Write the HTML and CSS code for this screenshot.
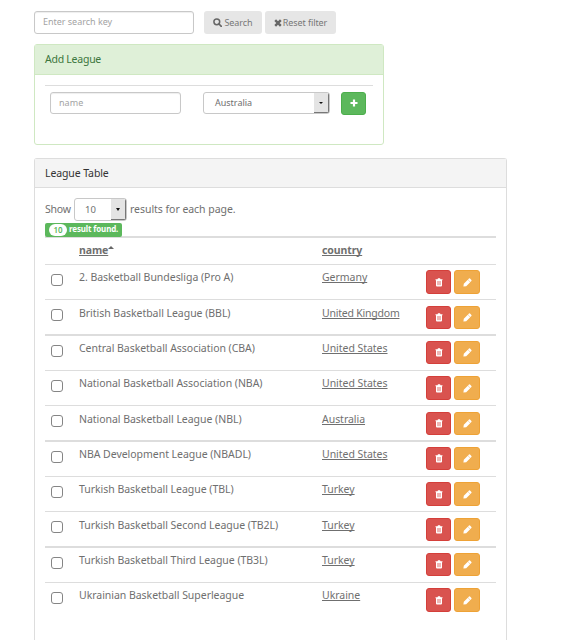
FILE: index.html
```
<!DOCTYPE html>
<html lang="en">
<head>
<meta charset="utf-8">
<title>League Table</title>
<link rel="stylesheet" href="styles.css">
</head>
<body>
<svg class="defs" width="0" height="0">
  <symbol id="trash" viewBox="0 0 8 9"><path d="M.5 1.200h2L3 .3h2l.5.900h2v1H7v5.300q0 1-1 1H2q-1 0-1-1V2.200H.5z" fill="#fff"/><path d="M3 3v4.200M5 3v4.200" stroke="#dc706c" stroke-width="1"/></symbol>
  <symbol id="pencil" viewBox="0 0 9 9"><path d="M.4 8.600l.4-2.800 4-4 2.400 2.400-4 4zM5 1.500l1-1q.5-.4 1 0l1.400 1.400q.4.5 0 1l-1 1z" fill="#fff"/></symbol>
</svg>
<form class="filter">
  <input class="field search" type="text" placeholder="Enter search key">
  <button class="grey find" type="button"><svg width="9" height="9" viewBox="0 0 9 9"><circle cx="3.8" cy="3.8" r="2.9" fill="none" stroke="#666" stroke-width="1.5"/><path d="M6 6l2.3 2.3" stroke="#666" stroke-width="1.7" stroke-linecap="round"/></svg><span>Search</span></button>
  <button class="grey reset" type="button"><svg width="8" height="8" viewBox="0 0 8 8"><path d="M1.200 1.200l5.600 5.600M6.800 1.200L1.200 6.800" stroke="#666" stroke-width="2.400"/></svg><span>Reset filter</span></button>
</form>
<section class="panel add">
  <h2>Add League</h2>
  <div class="add-row">
    <input class="field name" type="text" placeholder="name">
    <div class="select country"><span>Australia</span><i></i></div>
    <button class="plus" type="button"><svg width="8" height="8" viewBox="0 0 8 8"><path d="M4 .5v7M.5 4h7" stroke="#fff" stroke-width="2.200"/></svg></button>
  </div>
</section>
<section class="panel league">
  <h2>League Table</h2>
  <div class="show"><span class="show-l">Show</span><div class="select count"><span>10</span><i></i></div><span class="show-r">results for each page.</span></div>
  <div class="found"><b>10</b><span>result found.</span></div>
  <div class="head"><span></span><span class="sort"><a>name</a><i></i></span><a>country</a></div>
  <div class="rows">
    <div class="row"><input type="checkbox"><span>2. Basketball Bundesliga (Pro A)</span><a>Germany</a><button class="del"><svg><use href="#trash"/></svg></button><button class="edit"><svg><use href="#pencil"/></svg></button></div>
    <div class="row"><input type="checkbox"><span>British Basketball League (BBL)</span><a class="tight">United Kingdom</a><button class="del"><svg><use href="#trash"/></svg></button><button class="edit"><svg><use href="#pencil"/></svg></button></div>
    <div class="row"><input type="checkbox"><span>Central Basketball Association (CBA)</span><a>United States</a><button class="del"><svg><use href="#trash"/></svg></button><button class="edit"><svg><use href="#pencil"/></svg></button></div>
    <div class="row"><input type="checkbox"><span>National Basketball Association (NBA)</span><a>United States</a><button class="del"><svg><use href="#trash"/></svg></button><button class="edit"><svg><use href="#pencil"/></svg></button></div>
    <div class="row"><input type="checkbox"><span>National Basketball League (NBL)</span><a>Australia</a><button class="del"><svg><use href="#trash"/></svg></button><button class="edit"><svg><use href="#pencil"/></svg></button></div>
    <div class="row"><input type="checkbox"><span>NBA Development League (NBADL)</span><a>United States</a><button class="del"><svg><use href="#trash"/></svg></button><button class="edit"><svg><use href="#pencil"/></svg></button></div>
    <div class="row"><input type="checkbox"><span>Turkish Basketball League (TBL)</span><a>Turkey</a><button class="del"><svg><use href="#trash"/></svg></button><button class="edit"><svg><use href="#pencil"/></svg></button></div>
    <div class="row"><input type="checkbox"><span>Turkish Basketball Second League (TB2L)</span><a>Turkey</a><button class="del"><svg><use href="#trash"/></svg></button><button class="edit"><svg><use href="#pencil"/></svg></button></div>
    <div class="row"><input type="checkbox"><span>Turkish Basketball Third League (TB3L)</span><a>Turkey</a><button class="del"><svg><use href="#trash"/></svg></button><button class="edit"><svg><use href="#pencil"/></svg></button></div>
    <div class="row"><input type="checkbox"><span>Ukrainian Basketball Superleague</span><a>Ukraine</a><button class="del"><svg><use href="#trash"/></svg></button><button class="edit"><svg><use href="#pencil"/></svg></button></div>
  </div>
</section>
</body>
</html>
```
FILE: styles.css
```
* { box-sizing: border-box; }
body { margin: 0; padding: 11px 0 0 34px; height: 640px; background: #fff; color: #6f6f6f; font: 10.5px/14px "Noto Sans", sans-serif; }
button, input { font-family: inherit; margin: 0; }
button { border: 0; padding: 0; display: flex; align-items: center; justify-content: center; }
.defs { position: absolute; }
.filter { display: flex; height: 23px; }
.field { border: 1px solid #c8c8c8; border-radius: 3px; background: #fff; font-size: 9px; padding: 0 8px 1px; outline: 0; box-shadow: inset 0 1px 1px #eee; }
.field::placeholder { color: #a3a3a3; opacity: 1; }
.search { width: 160px; height: 23px; margin-right: 10px; padding-bottom: 2px; }
.search::placeholder { letter-spacing: -.02px; }
.grey { background: #e6e6e6; border-radius: 3px; color: #777; font-size: 9px; gap: 2px; }
.find { width: 58px; margin-right: 3px; letter-spacing: -.05px; }
.reset { width: 71px; gap: 1px; letter-spacing: -.08px; }
.panel { border: 1px solid #ddd; border-radius: 3px; }
.panel h2 { margin: 0; padding: 0 10px; font-size: 10.5px; font-weight: 400; border-bottom: 1px solid #ddd; letter-spacing: -.1px; }
.add { width: 350px; height: 101px; margin-top: 10px; border-color: #cfe8c2; }
.panel.add h2 { height: 30px; line-height: 29px; background: #dff0d8; color: #3c763d; border-color: #cfe8c2; letter-spacing: -.25px; }
.add-row { margin: 10px 10px 0; padding: 6px 0 0 5px; border-top: 1px solid #ddd; display: flex; }
.name { width: 131px; height: 22px; margin-right: 22px; }
.name::placeholder { letter-spacing: .05px; }
.select { border: 1px solid #c8c8c8; border-radius: 3px; display: flex; height: 22px; align-items: stretch; overflow: hidden; font-size: 9px; line-height: 20px; background: #fff; }
.select span { flex: 1; padding-left: 11px; }
.select i { width: 15px; background: #e4e4e4; border-right: 1px solid #777; border-bottom: 1px solid #777; display: flex; align-items: center; justify-content: center; }
.select i::after { content: ""; border: 2px solid transparent; border-top-color: #111; border-bottom: 0; }
.country { width: 127px; margin-right: 11px; }
.plus { width: 25px; height: 23px; border: 1px solid #4cae4c; border-radius: 3px; background: #5cb85c; }
.plus svg { margin-bottom: 2px; }
.league { width: 473px; height: 482px; margin-top: 13px; border-bottom: 0; border-radius: 3px 3px 0 0; }
.league h2 { height: 29px; line-height: 28px; background: #f4f4f4; color: #333; }
.show { display: flex; height: 23px; line-height: 23px; margin: 10px 10px 0; letter-spacing: -.04px; }
.show-l { width: 29px; letter-spacing: -.2px; }
.count { width: 53px; height: 23px; margin-right: 3px; }
.count span { padding-left: 10px; font-size: 9.5px; line-height: 21px; }
.count i::after { border-width: 3px 2.5px 0; }
.found { width: 77px; height: 14px; margin: 2px 0 0 10px; display: flex; align-items: center; border-radius: 2px; background: #5cb85c; color: #fff; font-size: 8px; line-height: 12px; font-weight: 700; position: relative; white-space: nowrap; padding-left: 4px; gap: 2px; letter-spacing: -.15px; }
.found span { margin-top: -2px; }
.found b { width: 18px; height: 12px; border-radius: 6px; background: #fff; color: #5cb85c; text-align: center; line-height: 12px; font-weight: 600; }
.head { margin: -1px 10px 0; height: 28px; border-top: 2px solid #ddd; display: grid; grid-template-columns: 34px 243px 1fr; padding-top: 5px; font-weight: 700; letter-spacing: -.1px; }
a { text-decoration: underline; text-decoration-thickness: 1px; text-underline-offset: 1px; text-decoration-skip-ink: none; }
.sort { display: flex; }
.sort i { margin-top: 3px; height: 0; border: 3px solid transparent; border-bottom-color: #666; border-top: 0; }
.rows { margin: 0 10px; }
.row { height: 35px; border-top: 1px solid #ddd; display: grid; grid-template-columns: 34px 243px 104px 28px 26px; align-items: start; padding-top: 5px; letter-spacing: -.035px; }
.row input { appearance: none; width: 12px; height: 12px; border: 1px solid #858585; border-radius: 3px; margin: 4px 0 0 6px; background: #fff; }
.row button { height: 24px; border: 1px solid #d43f3a; border-radius: 3px; }
.row .del { width: 25px; background: #d9534f; }
.row .edit { background: #f0ad4e; border-color: #eea236; }
.row svg { width: 8px; height: 9px; }
.row .edit svg { width: 9px; }
.row .tight { letter-spacing: -.22px; }
.row:nth-child(3n+2), .row:nth-child(3n) { padding-top: 6px; }
.row:nth-child(3n+2) button, .row:nth-child(3n) button { height: 23px; }
.row:nth-child(3n+2) input { margin-top: 3px; }
.row:nth-child(3n) { height: 36px; border-top-width: 2px; padding-top: 5px; }
```
